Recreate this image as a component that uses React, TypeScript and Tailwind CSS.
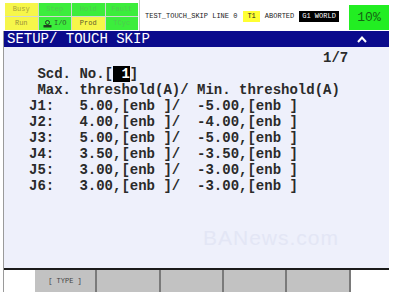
import React from 'react';

const statusCells = [
  { label: 'Busy', bg: 'bg-[#f6f64a]', fg: 'text-[#a9a23c]' },
  { label: 'Step', bg: 'bg-[#3ced3c]', fg: 'text-[#52c852]' },
  { label: 'Hold', bg: 'bg-[#3ced3c]', fg: 'text-[#52c852]' },
  { label: 'Fault', bg: 'bg-[#3ced3c]', fg: 'text-[#52c852]' },
  { label: 'Run', bg: 'bg-[#f6f64a]', fg: 'text-[#9a8f3a]' },
  { label: 'I/O', bg: 'bg-[#3ced3c]', fg: 'text-[#2d5a2d]', icon: true },
  { label: 'Prod', bg: 'bg-[#f6f64a]', fg: 'text-[#5c5a2a]' },
  { label: 'TCyc', bg: 'bg-[#3ced3c]', fg: 'text-[#52c852]' },
];

const joints = [
  { j: 'J1', max: ' 5.00', min: '-5.00' },
  { j: 'J2', max: ' 4.00', min: '-4.00' },
  { j: 'J3', max: ' 5.00', min: '-5.00' },
  { j: 'J4', max: ' 3.50', min: '-3.50' },
  { j: 'J5', max: ' 3.00', min: '-3.00' },
  { j: 'J6', max: ' 3.00', min: '-3.00' },
];

function IoIcon() {
  return (
    <svg width="9" height="8" viewBox="0 0 9 8" className="mr-[2px]">
      <circle cx="4.5" cy="2.5" r="2" fill="none" stroke="#1f3f1f" strokeWidth="1" />
      <rect x="0.5" y="5" width="8" height="2.5" fill="#1f3f1f" />
    </svg>
  );
}

export default function App() {
  return (
    <div className="relative w-[394px] h-[292px] bg-white overflow-hidden font-['Liberation_Mono',monospace]">
      {/* Status header */}
      <div className="flex h-[31px]">
        <div className="ml-[5px] mt-[3px] w-[133px] h-[27px] grid grid-cols-4 grid-rows-2 gap-[1px] bg-[#d0d8d0]">
          {statusCells.map((c) => (
            <div key={c.label} className={`${c.bg} ${c.fg} flex items-center justify-center text-[7px] leading-none`}>
              {c.icon && <IoIcon />}
              {c.label}
            </div>
          ))}
        </div>
        <div className="w-[1px] h-[31px] bg-[#c8c8c8] ml-[1px]" />
        <div className="flex items-center h-[31px] pt-[2px] ml-[5px] text-[7px] text-[#222] whitespace-pre">
          <span>TEST_TOUCH_SKIP LINE 0</span>
          <span className="ml-[6px] px-[4px] bg-[#ffff33] leading-[11px]">T1</span>
          <span className="ml-[5px]">ABORTED</span>
          <span className="ml-[5px] px-[3px] bg-black text-white leading-[11px]">G1 WORLD</span>
        </div>
        <div className="ml-auto mr-[5px] mt-[5px] w-[40px] h-[25px] bg-[#22ee22] flex items-center justify-center text-[13px] text-[#146414]">
          10%
        </div>
      </div>

      {/* Main panel */}
      <div className="ml-[3px] w-[386px] h-[261px] border-l border-[#9a9a9a] flex flex-col">
        <div className="h-[16px] bg-[#0b0b8c] flex items-center justify-between pl-[3px] pr-[22px]">
          <span className="text-white text-[14px] leading-none">SETUP/ TOUCH SKIP</span>
          <svg width="10" height="7" viewBox="0 0 10 7">
            <polyline points="1,6 5,1.5 9,6" fill="none" stroke="white" strokeWidth="2" />
          </svg>
        </div>
        <div className="h-[221px] bg-[#eef0fb] pl-[25px] pt-[3px] text-[14px] leading-[16px] font-bold text-[#2a2a2a] whitespace-pre">
          <div>{'                                   1/7'}</div>
          <div>
            {' Scd. No.['}
            <span className="bg-black text-white">{' 1'}</span>
            {']'}
          </div>
          <div>{' Max. threshold(A)/ Min. threshold(A)'}</div>
          {joints.map((r) => (
            <div key={r.j}>{`${r.j}:  ${r.max},[enb ]/  ${r.min},[enb ]`}</div>
          ))}
        </div>
        <div className="h-[2px] bg-[#1a1a1a]" />
        <div className="flex h-[22px] bg-white">
          <div className="w-[31px]" />
          <div className="w-[62px] bg-[#c2c2c2] border-r-2 border-[#7a7a7a] flex items-center justify-center text-[7px] text-[#444] whitespace-pre">
            {'[ TYPE ]'}
          </div>
          <div className="w-[64px] bg-[#c2c2c2] border-r-2 border-[#7a7a7a]" />
          <div className="w-[63px] bg-[#c2c2c2] border-r-2 border-[#7a7a7a]" />
          <div className="w-[63px] bg-[#c2c2c2] border-r-2 border-[#7a7a7a]" />
          <div className="w-[64px] bg-[#c2c2c2] border-r-2 border-[#7a7a7a]" />
        </div>
      </div>

      {/* Watermark */}
      <div className="absolute left-[203px] top-[222px] text-[21px] text-[#e3e6f5] font-['Liberation_Sans',sans-serif] tracking-[1px]">
        BANews.com
      </div>
    </div>
  );
}
